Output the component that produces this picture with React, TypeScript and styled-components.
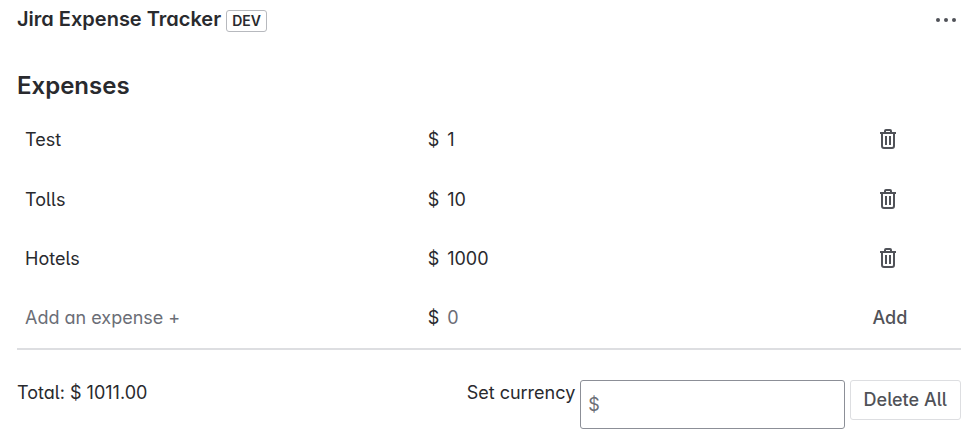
import React, { useState } from "react";
import type { FormEvent } from "react";
import styled, { createGlobalStyle } from "styled-components";

const Global = createGlobalStyle`
  * { box-sizing: border-box; }
  body {
    margin: 0;
    background: #fff;
    color: #292a2e;
    font: 18px/24px Inter, "Liberation Sans", sans-serif;
    font-feature-settings: "cv11", "cv05";
  }
  button, input { font: inherit; font-feature-settings: inherit; color: inherit; }
  button { cursor: pointer; }
`;

const Page = styled.main`
  padding: 4px 10px 16px 17px;
`;

const Header = styled.header`
  display: flex;
  align-items: center;
  justify-content: space-between;
`;

const Heading = styled.div`
  display: flex;
  align-items: center;
  gap: 5px;
`;

const Title = styled.h1`
  margin: 0;
  padding-bottom: 2px;
  font-size: 20px;
  line-height: 26px;
  font-weight: 600;
`;

const Badge = styled.span`
  margin-top: 2px;
  border: 1px solid #b7b9be;
  border-radius: 3px;
  padding: 0 5px;
  font-size: 14px;
  line-height: 20px;
  font-weight: 600;
`;

const IconButton = styled.button`
  display: flex;
  align-items: center;
  justify-content: center;
  width: 30px;
  height: 32px;
  padding: 0;
  border: 0;
  background: none;
  color: #505258;
`;

const SectionTitle = styled.h2`
  margin: 34px 0 7px;
  font-size: 24px;
  line-height: 32px;
  font-weight: 600;
`;

const List = styled.ul`
  margin: 0;
  padding: 0 0 2px;
  list-style: none;
  border-bottom: 2px solid #dddee1;
`;

const rowGrid = `
  display: grid;
  grid-template-columns: 43.5% 1fr 15.5%;
  align-items: center;
`;

const Row = styled.li`
  ${rowGrid}
  height: 60px;

  & + & { height: 59px; }
`;

const AddRow = styled.form`
  grid-column: 1 / -1;
  ${rowGrid}
`;

const Name = styled.span`
  padding: 2px 0 0 8px;
`;

const Amount = styled.div`
  display: flex;
  gap: 8px;
  padding-top: 2px;
`;

const Action = styled.div`
  display: flex;
  justify-content: center;
`;

const BareInput = styled.input`
  min-width: 0;
  width: 100%;
  padding: 0;
  border: 0;
  outline: 0;
  background: none;

  &::placeholder { color: #6b6e76; opacity: 1; }
`;

const NameInput = styled(BareInput)`
  padding: 2px 0 0 8px;
`;

const TextButton = styled.button`
  padding: 2px 0 0 4px;
  border: 0;
  background: none;
  color: #505258;
  font-weight: 500;
`;

const Footer = styled.footer`
  display: flex;
  align-items: flex-start;
  gap: 5px;
  margin-top: 30px;
`;

const Total = styled.div`
  flex: 1;
  padding-top: 1px;
`;

const CurrencyLabel = styled.label`
  padding-top: 1px;
`;

const CurrencyInput = styled.input`
  width: 28%;
  min-width: 80px;
  height: 49px;
  padding: 0 7px;
  border: 1px solid #8c8f97;
  border-radius: 3px;
  background: #fff;

  &::placeholder { color: #6b6e76; opacity: 1; }
`;

const DeleteAll = styled.button`
  height: 40px;
  padding: 0 13px;
  border: 1px solid #dddee1;
  border-radius: 3px;
  background: #fff;
  color: #505258;
  font-weight: 500;
  white-space: nowrap;
`;

function TrashIcon() {
  return (
    <svg width="16" height="20" viewBox="0 0 16 20" fill="none" stroke="currentColor" strokeWidth="2" aria-hidden="true">
      <path d="M0 4H16" />
      <path d="M5 4V2Q5 1 6 1H10Q11 1 11 2V4" />
      <path d="M2 4V17Q2 19 4 19H12Q14 19 14 17V4" />
      <path d="M6 7V16M10 7V16" />
    </svg>
  );
}

function MoreIcon() {
  return (
    <svg width="20" height="4" viewBox="0 0 20 4" fill="currentColor" aria-hidden="true">
      <circle cx="2" cy="2" r="2" />
      <circle cx="10" cy="2" r="2" />
      <circle cx="18" cy="2" r="2" />
    </svg>
  );
}

interface Expense {
  id: number;
  name: string;
  amount: number;
}

const initialExpenses: Expense[] = [
  { id: 1, name: "Test", amount: 1 },
  { id: 2, name: "Tolls", amount: 10 },
  { id: 3, name: "Hotels", amount: 1000 },
];

export default function App() {
  const [expenses, setExpenses] = useState(initialExpenses);
  const [name, setName] = useState("");
  const [amount, setAmount] = useState("");
  const [currency, setCurrency] = useState("");
  const symbol = currency || "$";
  const total = expenses.reduce((sum, expense) => sum + expense.amount, 0);

  const addExpense = (event: FormEvent) => {
    event.preventDefault();
    if (!name) return;
    setExpenses([...expenses, { id: Date.now(), name, amount: Number(amount) || 0 }]);
    setName("");
    setAmount("");
  };

  return (
    <>
      <Global />
      <Page>
        <Header>
          <Heading>
            <Title>Jira Expense Tracker</Title>
            <Badge>DEV</Badge>
          </Heading>
          <IconButton type="button" aria-label="More actions"><MoreIcon /></IconButton>
        </Header>
        <SectionTitle>Expenses</SectionTitle>
        <List>
          {expenses.map((expense) => (
            <Row key={expense.id}>
              <Name>{expense.name}</Name>
              <Amount><span>{symbol}</span><span>{expense.amount}</span></Amount>
              <Action>
                <IconButton
                  type="button"
                  aria-label={`Delete ${expense.name}`}
                  onClick={() => setExpenses(expenses.filter((item) => item.id !== expense.id))}
                >
                  <TrashIcon />
                </IconButton>
              </Action>
            </Row>
          ))}
          <Row>
            <AddRow onSubmit={addExpense}>
              <NameInput aria-label="Expense name" placeholder="Add an expense +" value={name} onChange={(e) => setName(e.target.value)} />
              <Amount>
                <span>{symbol}</span>
                <BareInput aria-label="Expense amount" inputMode="decimal" placeholder="0" value={amount} onChange={(e) => setAmount(e.target.value)} />
              </Amount>
              <Action><TextButton type="submit">Add</TextButton></Action>
            </AddRow>
          </Row>
        </List>
        <Footer>
          <Total>Total: {symbol} {total.toFixed(2)}</Total>
          <CurrencyLabel htmlFor="currency">Set currency</CurrencyLabel>
          <CurrencyInput id="currency" placeholder="$" value={currency} onChange={(e) => setCurrency(e.target.value)} />
          <DeleteAll type="button" onClick={() => setExpenses([])}>Delete All</DeleteAll>
        </Footer>
      </Page>
    </>
  );
}
